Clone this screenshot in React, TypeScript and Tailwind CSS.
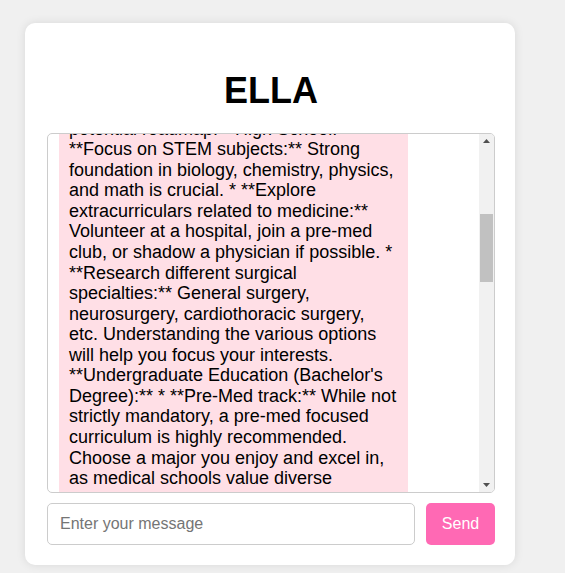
import { useLayoutEffect, useRef } from "react";

const before =
  "Becoming a surgeon is a challenging but incredibly rewarding journey. It requires years of dedication, hard work, and a genuine passion for helping others. The path is long, but with careful planning and persistence, it is absolutely achievable. Surgeons diagnose and treat injuries, diseases, and deformities through operative procedures, and they work closely with patients, families, and other healthcare professionals. Before committing to this career, it's worth reflecting on your motivations and making sure you understand the lifestyle it involves. Here's a";

const firstLine = "potential roadmap: * High School: * ";

const after =
  " on STEM subjects:** Strong foundation in biology, chemistry, physics, and math is crucial. * **Explore extracurriculars related to medicine:** Volunteer at a hospital, join a pre-med club, or shadow a physician if possible. * **Research different surgical specialties:** General surgery, neurosurgery, cardiothoracic surgery, etc. Understanding the various options will help you focus your interests. **Undergraduate Education (Bachelor's Degree):** * **Pre-Med track:** While not strictly mandatory, a pre-med focused curriculum is highly recommended. Choose a major you enjoy and excel in, as medical schools value diverse backgrounds. * **Maintain a high GPA:** Medical schools are highly competitive, so strive for excellent grades, especially in science courses. * **Prepare for the MCAT:** The Medical College Admission Test is a standardized exam required for admission to most medical schools. Start studying early and consider a prep course. * **Gain clinical experience:** Volunteer or work in healthcare settings to demonstrate your commitment to medicine. **Medical School (Doctor of Medicine - MD or Doctor of Osteopathic Medicine - DO):** * **Four years of rigorous study:** The first two years focus on classroom learning in basic sciences, while the last two years involve clinical rotations in various specialties. * **USMLE or COMLEX exams:** You'll need to pass a series of licensing exams throughout medical school. * **Surgical rotations:** Make the most of your surgery rotations to gain hands-on experience and build relationships with surgeons who can write letters of recommendation. **Residency:** * **Match into a surgical residency program:** This is a highly competitive process. Residency lasts 5-7 years depending on the specialty. * **Intense training:** You'll work long hours, gain extensive operating room experience, and develop your surgical skills under supervision. **Fellowship (Optional):** * **Subspecialty training:** If you want to specialize further (e.g., pediatric surgery, vascular surgery), you'll complete a 1-3 year fellowship. **Board Certification:** * **Pass board exams:** After residency, you'll take written and oral exams to become board-certified in your specialty. **Tips for Success:** * **Develop strong study habits and time management skills.** * **Build resilience and learn to handle stress.** * **Find mentors who can guide and support you.** * **Take care of your physical and mental health.** Becoming a surgeon requires dedication, perseverance, and a genuine passion for helping others. Good luck on your journey!";

export default function App() {
  const boxRef = useRef<HTMLDivElement>(null);
  const markRef = useRef<HTMLSpanElement>(null);

  useLayoutEffect(() => {
    const box = boxRef.current;
    const mark = markRef.current;
    if (!box || !mark) return;
    const set = () => {
      const off =
        mark.getBoundingClientRect().top -
        box.getBoundingClientRect().top +
        box.scrollTop;
      box.scrollTop = off - 5.7;
    };
    set();
    if (document.fonts && document.fonts.ready) {
      document.fonts.ready.then(set);
    }
  }, []);

  return (
    <div
      className="min-h-screen bg-[#f0f0f0] pt-[23px] pl-[25px]"
      style={{ fontFamily: '"Liberation Sans", Arial, sans-serif' }}
    >
      <div className="flex w-[490px] flex-col rounded-[10px] bg-white pt-[20px] pr-[20px] pb-[20px] pl-[22px] shadow-[0_0_10px_rgba(0,0,0,0.1)]">
        <h1 className="mt-[27px] mb-[21px] text-center text-[36px] leading-[normal] font-bold text-black">
          ELLA
        </h1>
        <div className="flex h-[360px] overflow-hidden rounded-[5px] border border-[#ccc] bg-white">
          <div
            ref={boxRef}
            className="min-w-0 flex-1 overflow-hidden py-[10px] pr-[10px] pl-[11px]"
          >
            <div className="mb-[10px] flex justify-end">
              <div className="max-w-[349px] rounded-[5px] bg-[#e3e3e3] p-[10px] text-[18px] leading-[20.55px] text-black">
                How do I become a surgeon?
              </div>
            </div>
            <div className="flex justify-start">
              <div className="max-w-[349px] bg-[#ffdfe6] p-[10px] text-[18px] leading-[20.55px] text-black">
                {before}
                <br />
                {firstLine}
                <span ref={markRef}>**Focus</span>
                {after}
              </div>
            </div>
          </div>
          <div className="flex w-[15px] flex-col bg-[#f1f1f1]">
            <div className="flex h-[15px] items-center justify-center pb-px">
              <svg width="7" height="4" viewBox="0 0 7 4">
                <polygon points="3.5,0 7,4 0,4" fill="#505050" />
              </svg>
            </div>
            <div className="flex-1 px-px">
              <div className="mt-[65px] h-[68px] bg-[#c1c1c1]" />
            </div>
            <div className="flex h-[15px] items-center justify-center">
              <svg width="7" height="4" viewBox="0 0 7 4">
                <polygon points="0,0 7,0 3.5,4" fill="#505050" />
              </svg>
            </div>
          </div>
        </div>
        <div className="mt-[10px] flex gap-[11px]">
          <input
            type="text"
            placeholder="Enter your message"
            className="h-[42px] min-w-0 flex-1 rounded-[5px] border border-[#ccc] px-[12px] text-[16px] text-black outline-none placeholder:text-[#757575]"
          />
          <button className="h-[42px] w-[69px] rounded-[5px] bg-[#ff69b4] text-[16px] text-white">
            Send
          </button>
        </div>
      </div>
    </div>
  );
}
